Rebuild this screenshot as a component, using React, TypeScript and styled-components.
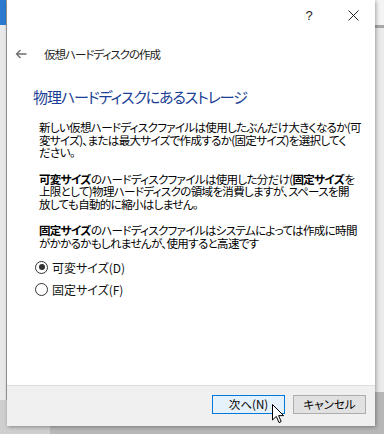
import styled, { createGlobalStyle } from "styled-components";

const GlobalStyle = createGlobalStyle`
  html, body {
    margin: 0;
    padding: 0;
    background: #bdbdbd;
  }
  body {
    font-family: "Noto Sans CJK JP", "Noto Sans", sans-serif;
  }
`;

const Desktop = styled.div`
  position: relative;
  width: 384px;
  height: 434px;
  overflow: hidden;
  display: flex;
  background: linear-gradient(to right, #cfcfcf 0 50px, #b7b7b7 50px);
`;

const LeftWindow = styled.div`
  width: 7px;
  height: 400px;
  display: flex;
  flex-direction: column;
  border-right: 1px solid #9a9a9a;
  box-sizing: border-box;
`;

const WinStrip = styled.div<{ $color: string; $h?: number }>`
  background: ${(p) => p.$color};
  height: ${(p) => (p.$h ? `${p.$h}px` : "auto")};
  flex: ${(p) => (p.$h ? "none" : 1)};
`;

const RightWindow = styled.div`
  flex: 1;
  height: 392px;
  display: flex;
  flex-direction: column;
`;

const Dialog = styled.div`
  width: 368px;
  height: 426px;
  background: #ffffff;
  display: flex;
  flex-direction: column;
  box-shadow: 1px 1px 4px rgba(0, 0, 0, 0.35);
  position: relative;
  z-index: 1;
`;

const TitleBar = styled.div`
  height: 32px;
  display: flex;
  justify-content: flex-end;
`;

const TitleButton = styled.div`
  width: 44px;
  height: 30px;
  display: flex;
  align-items: center;
  justify-content: center;
  color: #222;
  font-family: "Liberation Sans", sans-serif;
  font-size: 13px;
`;

const Header = styled.div`
  height: 44px;
  display: flex;
  align-items: center;
  padding-left: 8px;
  gap: 17px;
  font-size: 11.5px;
  letter-spacing: -1px;
  color: #1b1b1b;
  font-feature-settings: "palt";
`;

const Heading = styled.div`
  margin: 9px 0 0 26px;
  height: 24px;
  line-height: 24px;
  font-size: 15px;
  color: #1a3f95;
  font-feature-settings: "palt";
  letter-spacing: -1.1px;
  white-space: nowrap;
`;

const Body = styled.div`
  flex: 1;
  padding: 12px 0 0 32px;
  display: flex;
  flex-direction: column;
  gap: 14px;
`;

const Para = styled.p`
  margin: 0;
  font-size: 11.5px;
  line-height: 12.5px;
  color: #000;
  white-space: nowrap;
  font-feature-settings: "palt";
  letter-spacing: -0.65px;
  b {
    font-weight: 700;
  }
`;

const RadioGroup = styled.div`
  display: flex;
  flex-direction: column;
  gap: 8px;
  margin-top: -3px;
`;

const RadioRow = styled.label`
  display: flex;
  align-items: center;
  gap: 4px;
  height: 14px;
  font-size: 12px;
  color: #111;
  font-feature-settings: "palt";
  margin-left: -4px;
`;

const RadioCircle = styled.span<{ $checked?: boolean }>`
  width: 11px;
  height: 11px;
  border: 1px solid #333;
  border-radius: 50%;
  display: flex;
  align-items: center;
  justify-content: center;
  &::after {
    content: "";
    width: 6px;
    height: 6px;
    border-radius: 50%;
    background: ${(p) => (p.$checked ? "#333" : "transparent")};
  }
`;

const Footer = styled.div`
  height: 41px;
  box-sizing: border-box;
  background: #f0f0f0;
  border-top: 1px solid #dcdcdc;
  display: flex;
  justify-content: flex-end;
  align-items: flex-start;
  padding: 9px 9px 0 0;
  gap: 8px;
`;

const Button = styled.button<{ $primary?: boolean }>`
  width: 73px;
  height: 19px;
  padding: 0;
  box-sizing: border-box;
  border: 1px solid ${(p) => (p.$primary ? "#0078d7" : "#adadad")};
  background: ${(p) => (p.$primary ? "#e5f1fb" : "#e1e1e1")};
  font-family: "Noto Sans CJK JP", sans-serif;
  font-size: 11.5px;
  font-feature-settings: "palt";
  color: #000;
  line-height: 17px;
`;

const Cursor = styled.svg`
  position: absolute;
  left: 272px;
  top: 404px;
  z-index: 5;
`;

export default function App() {
  return (
    <>
      <GlobalStyle />
      <Desktop>
        <LeftWindow>
          <WinStrip $color="#2b7ad0" $h={25} />
          <WinStrip $color="#e9e9e9" />
        </LeftWindow>
        <Dialog>
          <TitleBar>
            <TitleButton>?</TitleButton>
            <TitleButton>
              <svg width="11" height="11" viewBox="0 0 11 11">
                <path d="M0.5 0.5 L10.5 10.5 M10.5 0.5 L0.5 10.5" stroke="#222" strokeWidth="1" />
              </svg>
            </TitleButton>
          </TitleBar>
          <Header>
            <svg width="12" height="10" viewBox="0 0 12 10">
              <path d="M11.5 5 H1.5 M5.5 1 L1.5 5 L5.5 9" stroke="#6d6d6d" strokeWidth="1.3" fill="none" />
            </svg>
            <span>仮想ハードディスクの作成</span>
          </Header>
          <Heading>物理ハードディスクにあるストレージ</Heading>
          <Body>
            <Para>
              新しい仮想ハードディスクファイルは使用したぶんだけ大きくなるか(可
              <br />
              変サイズ)、または最大サイズで作成するか(固定サイズ)を選択してく
              <br />
              ださい。
            </Para>
            <Para>
              <b>可変サイズ</b>のハードディスクファイルは使用した分だけ(<b>固定サイズ</b>を
              <br />
              上限として)物理ハードディスクの領域を消費しますが、スペースを開
              <br />
              放しても自動的に縮小はしません。
            </Para>
            <Para>
              <b>固定サイズ</b>のハードディスクファイルはシステムによっては作成に時間
              <br />
              がかかるかもしれませんが、使用すると高速です
            </Para>
            <RadioGroup>
              <RadioRow>
                <RadioCircle $checked />
                可変サイズ(D)
              </RadioRow>
              <RadioRow>
                <RadioCircle />
                固定サイズ(F)
              </RadioRow>
            </RadioGroup>
          </Body>
          <Footer>
            <Button $primary>次へ(N)</Button>
            <Button>キャンセル</Button>
          </Footer>
        </Dialog>
        <RightWindow>
          <WinStrip $color="#f4f4f4" $h={25} />
          <WinStrip $color="#a8a8a8" $h={3} />
          <WinStrip $color="#eaeaea" />
        </RightWindow>
        <Cursor width="13" height="20" viewBox="0 0 13 20">
          <path
            d="M0.5 0.5 L0.5 16 L4.3 12.4 L7 18.6 L9.2 17.6 L6.6 11.6 L11.6 11.6 Z"
            fill="#fff"
            stroke="#000"
            strokeWidth="1"
            strokeLinejoin="miter"
          />
        </Cursor>
      </Desktop>
    </>
  );
}
